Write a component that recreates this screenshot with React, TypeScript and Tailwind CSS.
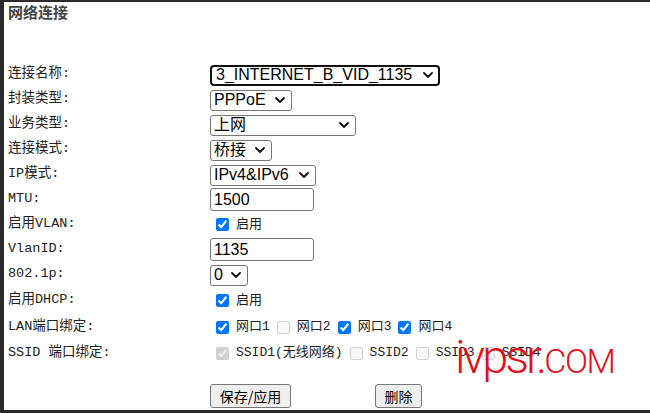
import React from 'react';

const labelFont = "font-['Liberation_Mono','Noto_Sans_CJK_SC',monospace]";
const ctrlFont = "font-['Liberation_Sans','Noto_Sans_CJK_SC',sans-serif]";

const Chevron = () => (
  <svg width="10" height="6" viewBox="0 0 10 6" className="pointer-events-none absolute right-[7px] top-1/2 -translate-y-1/2">
    <path d="M1 1 L5 5 L9 1" fill="none" stroke="#111" strokeWidth="1.8" strokeLinecap="round" strokeLinejoin="round" />
  </svg>
);

const Select = ({w, value, focus = false}: {w: string; value: string; focus?: boolean}) => (
  <div className={`relative h-[21px] ${w}`}>
    <select
      defaultValue={value}
      className={`appearance-none h-full w-full bg-white pl-[3px] text-[16px] leading-none text-black ${ctrlFont} ${focus ? 'border-2 border-[#101010] rounded-[4px] pl-[4px]' : 'border border-[#767676] rounded-[3px]'}`}
    >
      <option>{value}</option>
    </select>
    <Chevron />
  </div>
);

const TextInput = ({value}: {value: string}) => (
  <input
    defaultValue={value}
    className={`h-[23px] w-[104px] border border-[#767676] rounded-[3px] bg-white pl-[3px] text-[16px] text-black ${ctrlFont}`}
  />
);

const Check = ({label, checked, disabled = false}: {label: string; checked: boolean; disabled?: boolean}) => (
  <label className="flex items-center gap-[7px]">
    <input type="checkbox" defaultChecked={checked} disabled={disabled}
           className="m-0 h-[13px] w-[13px] accent-[#0075ff]" />
    <span className="text-[13px] text-[#222]">{label}</span>
  </label>
);

const Row = ({label, h, children}: {label: string; h: string; children: React.ReactNode}) => (
  <div className={`flex items-center ${h}`}>
    <div className="w-[206px] pl-1 text-[13.5px] text-[#222]">{label}</div>
    <div className="flex items-center">{children}</div>
  </div>
);

const App = () => {
  return (
    <div className={`relative w-[650px] h-[413px] overflow-hidden bg-white border-l-4 border-t-2 border-b-[3px] border-[#2b2b2b] ${labelFont}`}>
      <div className="h-[60px] pl-1">
        <h2 className="text-[15px] leading-[20px] font-bold text-[#444] font-['Noto_Sans_CJK_SC',sans-serif]">网络连接</h2>
      </div>

      <Row label="连接名称:" h="h-[25px]"><Select w="w-[230px]" value="3_INTERNET_B_VID_1135" focus /></Row>
      <Row label="封装类型:" h="h-[25px]"><Select w="w-[82px]" value="PPPoE" /></Row>
      <Row label="业务类型:" h="h-[25px]"><Select w="w-[146px]" value="上网" /></Row>
      <Row label="连接模式:" h="h-[25px]"><Select w="w-[62px]" value="桥接" /></Row>
      <Row label="IP模式:" h="h-[25px]"><Select w="w-[106px]" value="IPv4&IPv6" /></Row>
      <Row label="MTU:" h="h-[25px]"><TextInput value="1500" /></Row>
      <Row label="启用VLAN:" h="h-[25px]">
        <div className="pl-[6px]"><Check label="启用" checked /></div>
      </Row>
      <Row label="VlanID:" h="h-[25px]"><TextInput value="1135" /></Row>
      <Row label="802.1p:" h="h-[25px]"><Select w="w-[38px]" value="0" /></Row>
      <Row label="启用DHCP:" h="h-[27px]">
        <div className="pl-[6px]"><Check label="启用" checked /></div>
      </Row>
      <Row label="LAN端口绑定:" h="h-[26px]">
        <div className="flex items-center gap-[7px] pl-[6px]">
          <Check label="网口1" checked />
          <Check label="网口2" checked={false} disabled />
          <Check label="网口3" checked />
          <Check label="网口4" checked />
        </div>
      </Row>
      <Row label="SSID 端口绑定:" h="h-[26px]">
        <div className="flex items-center gap-[7px] pl-[6px]">
          <Check label="SSID1(无线网络)" checked disabled />
          <Check label="SSID2" checked={false} disabled />
          <Check label="SSID3" checked={false} disabled />
          <Check label="SSID4" checked={false} disabled />
        </div>
      </Row>

      <div className="mt-[18px] flex h-[24px] pl-[206px]">
        <button className="h-[24px] w-[81px] rounded-[3px] border border-[#767676] bg-[#efefef] text-[14px] text-black font-['Noto_Sans_CJK_SC',sans-serif]">保存/应用</button>
        <button className="ml-[84px] h-[24px] w-[47px] rounded-[3px] border border-[#767676] bg-[#efefef] text-[14px] text-black font-['Noto_Sans_CJK_SC',sans-serif]">删除</button>
      </div>

      <div className="pointer-events-none absolute left-[451px] top-[331px] flex items-baseline text-[#e3101a] font-['Roboto',sans-serif] font-light leading-none">
        <span className="text-[47px] tracking-[-3px]">ivpsr.</span>
        <span className="text-[34px] tracking-[-1.5px]">COM</span>
      </div>
    </div>
  );
};

export default App;
